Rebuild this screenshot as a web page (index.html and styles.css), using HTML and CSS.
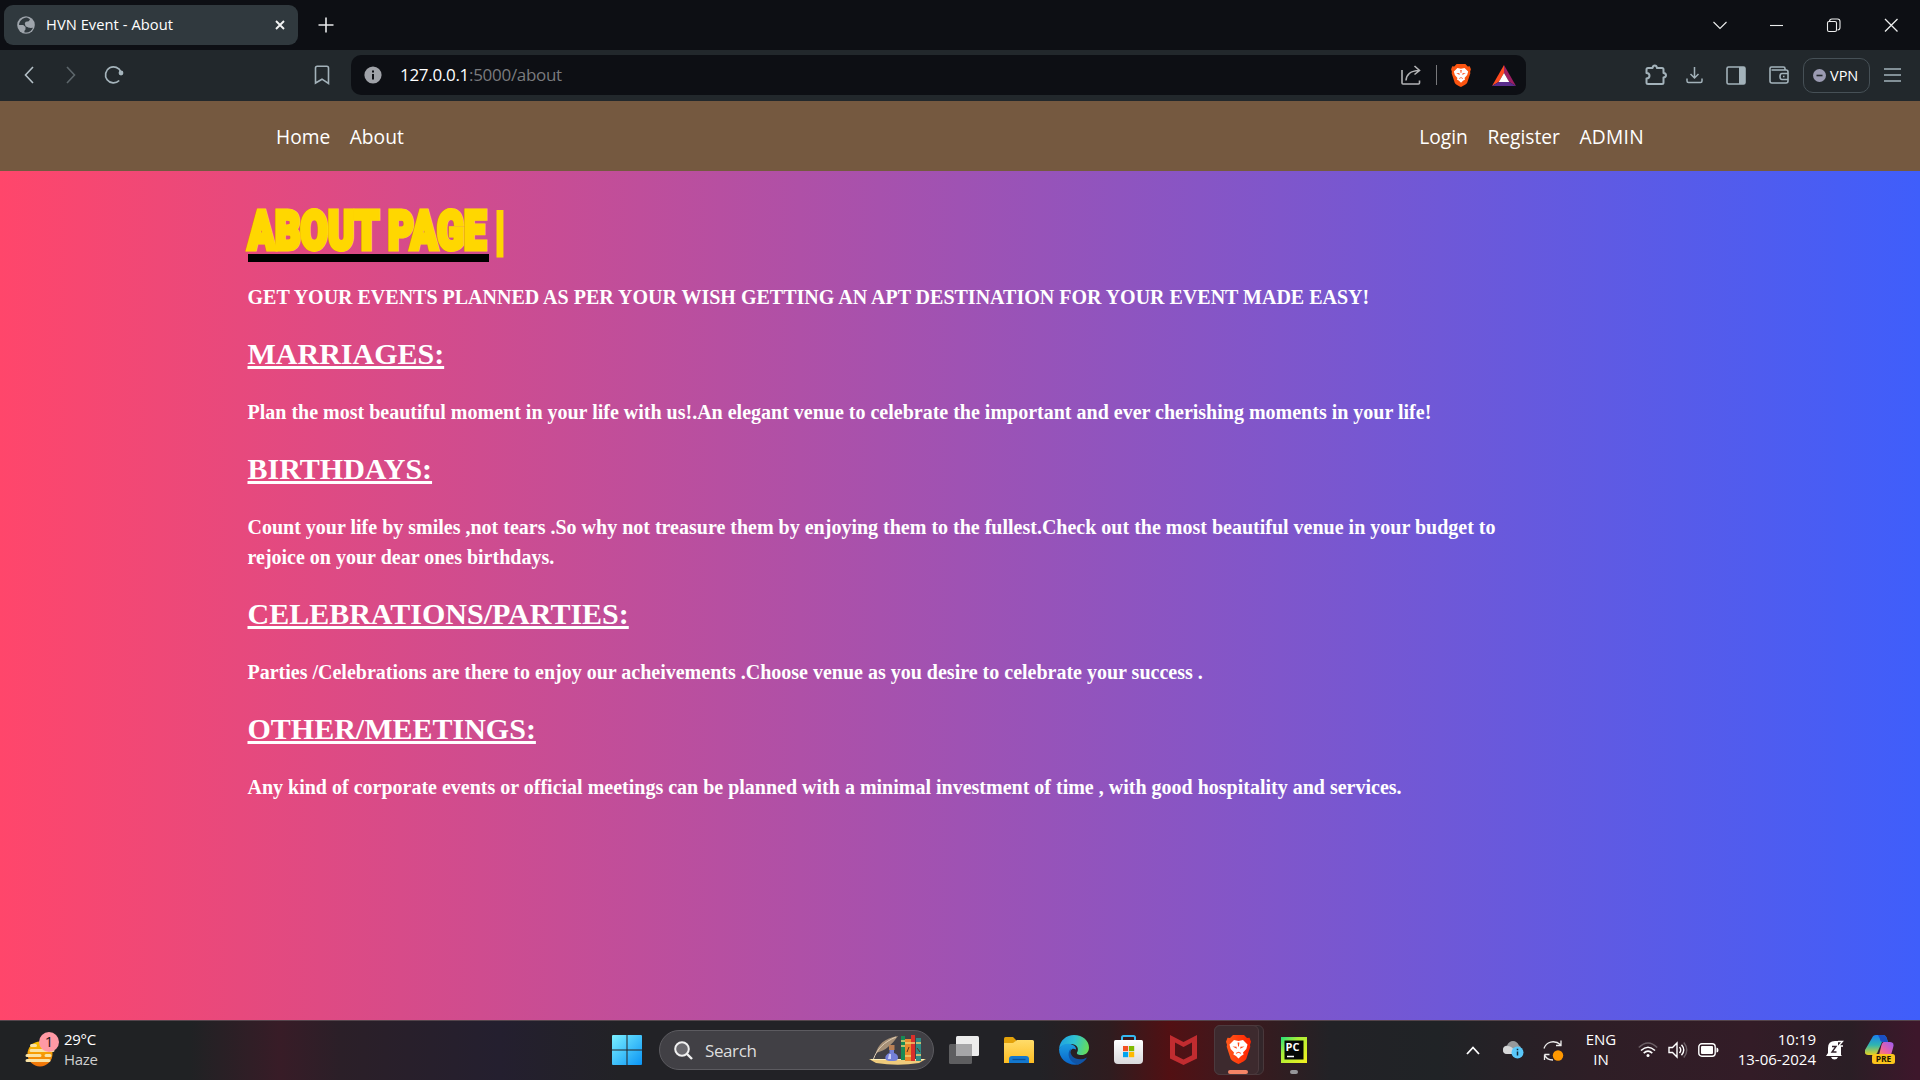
FILE: index.html
```html
<!DOCTYPE html>
<html lang="en">
<head>
<meta charset="utf-8">
<title>HVN Event - About</title>
<link rel="stylesheet" href="styles.css">
</head>
<body>
<svg class="defs" width="0" height="0">
  <defs>
    <linearGradient id="win" x1="0" y1="0" x2="1" y2="1"><stop offset="0" stop-color="#7af0ff"/><stop offset="1" stop-color="#0a94f5"/></linearGradient>
    <linearGradient id="sun" x1="0" y1="0" x2="0" y2="1"><stop offset="0" stop-color="#fbc500"/><stop offset="1" stop-color="#f0700a"/></linearGradient>
    <linearGradient id="folder" x1="0" y1="0" x2="0" y2="1"><stop offset="0" stop-color="#ffdc6a"/><stop offset="1" stop-color="#fdbd22"/></linearGradient>
    <linearGradient id="edgeA" x1="0" y1=".3" x2="1" y2=".5"><stop offset="0" stop-color="#1ea0e4"/><stop offset=".5" stop-color="#30c3d0"/><stop offset="1" stop-color="#66dc5a"/></linearGradient>
    <linearGradient id="edgeB" x1="0" y1="0" x2="0" y2="1"><stop offset="0" stop-color="#1b9de2"/><stop offset="1" stop-color="#0a64c8"/></linearGradient>
    <linearGradient id="bag" x1="0" y1="0" x2="0" y2="1"><stop offset="0" stop-color="#ffffff"/><stop offset="1" stop-color="#d9d9db"/></linearGradient>
    <linearGradient id="brave" x1="0" y1="0" x2="1" y2="0"><stop offset="0" stop-color="#ff5a1c"/><stop offset="1" stop-color="#ff2200"/></linearGradient>
    <linearGradient id="pc" x1="0" y1="0" x2="1" y2="1"><stop offset="0" stop-color="#21e07c"/><stop offset=".35" stop-color="#a8ee38"/><stop offset="1" stop-color="#f4f01e"/></linearGradient>
    <linearGradient id="copA" x1="0" y1="0" x2="0" y2="1"><stop offset="0" stop-color="#1a7ff0"/><stop offset=".5" stop-color="#2fb5b0"/><stop offset="1" stop-color="#e8d21e"/></linearGradient>
    <linearGradient id="copB" x1="1" y1="0" x2="0" y2="1"><stop offset="0" stop-color="#9a5cf5"/><stop offset=".6" stop-color="#e861a8"/><stop offset="1" stop-color="#ff8a5a"/></linearGradient>
    <symbol id="lion" viewBox="0 0 25 29">
      <path d="M7 0h11l3 3 2.500-.3 1.500 4-1 3 .3 2-4 12c-1 2-5 4-7.800 5.300C9.700 27.700 6 26 4.700 24L.7 11.700 1 9.700 0 6.700l1.500-4L4 3z"/>
      <path fill="#fff" d="M8 5l4.500 1L17 5l4.500 4.500-1.200 4.500-3.300 3.500.6 2-2.600 1.500-2.500 2.500-2.500-2.500L7.400 19.500l.6-2-3.300-3.500-1.200-4.500z"/>
      <path fill="#ff4716" d="M6.500 11.500l4 .3.300 2zM18.500 11.500l-4 .3-.3 2zM9.800 18l2.700-1.300 2.700 1.300-.5.700-2.200-1-2.200 1zM11.600 7.500h1.800l-.5 4h-.8z"/>
    </symbol>
  </defs>
</svg>

<header class="tabs">
  <div class="tab">
    <svg class="globe" width="18" height="18" viewBox="0 0 18 18"><circle cx="9" cy="9" r="8.800" fill="#9fa5ac"/><path d="M9.500 1.600C6 2 2.300 4.500 2 9h4.200l2.300 2v2.500L7.300 15l.3 1.400c4 .8 7.200-1.500 8.400-4.600l-2.500.2-3-1.500-2.800-3 1-1.700 3-.6L13 3.400c-1-.9-2-1.500-3.500-1.800z" fill="#30393e"/><path d="M8 7.500h4l2 3-2 1.200-3.500-1.500z" fill="#9fa5ac"/></svg>
    <span class="tab-title">HVN Event - About</span>
    <svg class="tab-close" width="10" height="10" viewBox="0 0 10 10"><path d="M1 1l8 8M9 1l-8 8" stroke="#f2f3f4" stroke-width="1.900"/></svg>
  </div>
  <svg class="plus" width="16" height="16" viewBox="0 0 16 16"><path d="M8 .5v15M.5 8h15" stroke="#e8e9ea" stroke-width="1.600"/></svg>
  <svg class="window-buttons" width="186" height="16" viewBox="0 0 186 16" fill="none" stroke="#eceded" stroke-width="1.100"><path d="M.5 5L7 11.500 13.500 5"/><path d="M57 8.500h13" stroke-width="1.100"/><rect x="114.500" y="4.500" width="9" height="10" rx="1.500"/><path d="M116.500 4.500q0-2.500 2.500-2.500h5.500q2.500 0 2.500 2.500v6q0 2.500-2.500 2.500"/><path d="M172 2l12.500 12.500M184.500 2L172 14.500" stroke-width="1.300"/></svg>
</header>

<div class="toolbar">
  <svg class="back" width="10" height="18" viewBox="0 0 10 18"><path d="M9 1L1.500 9 9 17" fill="none" stroke="#b4c0c7" stroke-width="1.600"/></svg>
  <svg class="forward" width="10" height="18" viewBox="0 0 10 18"><path d="M1 1l7.500 8L1 17" fill="none" stroke="#5d666b" stroke-width="1.600"/></svg>
  <svg class="reload" width="20" height="20" viewBox="0 0 20 20"><path d="M15.200 15.500A8 8 0 1 1 17 7" fill="none" stroke="#a5b4bc" stroke-width="1.700"/><circle cx="17" cy="8" r="2.400" fill="#a5b4bc"/></svg>
  <svg class="bookmark" width="16" height="20" viewBox="0 0 16 20"><path d="M1.500 18V3q0-1.700 1.700-1.700h9.600q1.700 0 1.700 1.700v15.500L8 14.200z" fill="none" stroke="#a3b2ba" stroke-width="1.600"/></svg>
  <div class="address">
    <svg class="info" width="18" height="18" viewBox="0 0 18 18"><circle cx="9" cy="9" r="8.600" fill="#9fa2a8"/><path d="M9 8v5.500M9 4.500v2" stroke="#0d0f14" stroke-width="2"/></svg>
    <span class="url"><b>127.0.0.1</b>:5000/about</span>
    <svg class="share" width="20" height="20" viewBox="0 0 20 20" fill="none" stroke="#b3b4b6" stroke-width="1.600"><path d="M1 5v13q0 1 1 1h15.500q1 0 1-1v-2.500M5 15.500C5.500 9 9 6 18 5.500M13.500 1l5 4.500-5 4"/></svg>
    <span class="divider"></span>
    <svg class="shield" width="20" height="23"><use href="#lion" fill="#fb5410"/></svg>
    <svg class="bat" width="24" height="21" viewBox="0 0 24 21"><path d="M12 0L0 21l7-4.200L12 8z" fill="#ff4b1f"/><path d="M12 0l12 21-7-4.200L12 8z" fill="#9e1f63"/><path d="M0 21h24l-7-4.200H7z" fill="#5a2d8c"/><path d="M12 8L6.800 17h10.400z" fill="#fff"/></svg>
  </div>
  <svg class="ext" width="22" height="22" viewBox="0 0 22 22"><path d="M3 4h4.500q.5-2.500 2.300-2.500T12 4h5q1.500 0 1.500 1.500V9q2.500.3 2.500 2.200t-2.500 2.300v5q0 1.500-1.500 1.500H3q-1.500 0-1.500-1.500v-4q3-.3 3-2.800t-3-2.700V5.500Q1.500 4 3 4z" fill="none" stroke="#a3b2ba" stroke-width="2" stroke-linejoin="round"/></svg>
  <svg class="down" width="17" height="18" viewBox="0 0 17 18"><path d="M8.500 1v11M4.500 8l4 4 4-4M1 12.500V15q0 1.500 1.500 1.500h12q1.500 0 1.500-1.500v-2.500" fill="none" stroke="#a3b2ba" stroke-width="1.500"/></svg>
  <svg class="side" width="20" height="19" viewBox="0 0 20 19"><rect x="1" y="1" width="18" height="17" rx="1.500" fill="none" stroke="#a3b2ba" stroke-width="1.600"/><path d="M13 1h6v17h-6z" fill="#a3b2ba"/></svg>
  <svg class="wallet" width="20" height="18" viewBox="0 0 20 18"><path d="M16 4V2.500Q16 1 14.500 1H2.500Q1 1 1 2.500V15q0 2 2 2h14q2 0 2-2V6q0-2-2-2H2.500M19 7.500h-6q-2 0-2 3t2 3h6M14 10.500h1.500" fill="none" stroke="#a3b2ba" stroke-width="1.600"/></svg>
  <div class="vpn"><svg width="13" height="13" viewBox="0 0 13 13"><circle cx="6.500" cy="6.500" r="6.500" fill="#9b9bb2"/><path d="M3.500 6.500h6" stroke="#23282c" stroke-width="1.600"/></svg><span>VPN</span></div>
  <svg class="menu" width="17" height="14" viewBox="0 0 17 14"><path d="M0 1h17M0 7h17M0 13h17" stroke="#a3b2ba" stroke-width="1.500"/></svg>
</div>

<nav class="navbar">
  <div class="links"><a>Home</a><a>About</a></div>
  <div class="links"><a>Login</a><a>Register</a><a class="admin">ADMIN</a></div>
</nav>

<main class="page">
  <h1><span class="title"><span class="title-text">ABOUT PAGE</span></span><span class="cursor">|</span></h1>
  <p class="lead">GET YOUR EVENTS PLANNED AS PER YOUR WISH GETTING AN APT DESTINATION FOR YOUR EVENT MADE EASY!</p>
  <h2>MARRIAGES:</h2>
  <p>Plan the most beautiful moment in your life with us!.An elegant venue to celebrate the important and ever cherishing moments in your life!</p>
  <h2>BIRTHDAYS:</h2>
  <p>Count your life by smiles ,not tears .So why not treasure them by enjoying them to the fullest.Check out the most beautiful venue in your budget to<br>rejoice on your dear ones birthdays.</p>
  <h2>CELEBRATIONS/PARTIES:</h2>
  <p>Parties /Celebrations are there to enjoy our acheivements .Choose venue as you desire to celebrate your success .</p>
  <h2>OTHER/MEETINGS:</h2>
  <p>Any kind of corporate events or official meetings can be planned with a minimal investment of time , with good hospitality and services.</p>
</main>

<footer class="taskbar">
  <svg class="weather" width="34" height="36" viewBox="0 0 34 36"><circle cx="15" cy="22" r="12.500" fill="url(#sun)"/><path d="M6.500 13.500h4M6 18.500h22M2 23.500h13M21 23.500h4M2 28.500h22" stroke="#f9e3a5" stroke-width="3" stroke-linecap="round"/><circle cx="24" cy="10" r="10" fill="#ff99a4"/><text x="24" y="15" text-anchor="middle" class="badge">1</text></svg>
  <div class="temp"><span>29°C</span><span class="haze">Haze</span></div>
  <svg class="start" width="30" height="30" viewBox="0 0 30 30"><path d="M1 0h13.500v14.500H0V1q0-1 1-1zM15.500 0H29q1 0 1 1v13.500H15.500zM0 15.500h14.500V30H1q-1 0-1-1zM15.500 15.500H30V29q0 1-1 1H15.500z" fill="url(#win)"/></svg>
  <div class="search">
    <svg class="lens" width="19" height="19" viewBox="0 0 19 19"><circle cx="8" cy="8" r="6.800" fill="#6a696e" stroke="#f1f1f1" stroke-width="2"/><path d="M13 13l5 5" stroke="#f1f1f1" stroke-width="2.400"/></svg>
    <span>Search</span>
    <svg class="books" width="57" height="30" viewBox="0 0 57 30"><path d="M0 24h57l-7 4q-21 3.500-43 0z" fill="#efcb7c"/><path d="M2 24.500h53" stroke="#fff0b8" stroke-width="1"/><path d="M7 18C9 10 15 3 29 1c-3 4-6 8-10 11-3 3-7 4-12 6z" fill="#a58f76"/><path d="M4.500 24C8 14 15 7 27 2" stroke="#e1cfb5" fill="none"/><path d="M20 10h5.500v5H20z" fill="#b98055"/><path d="M20.500 15h4.500v3q4 1 4 4.500t-4 3.500h-5q-4-.5-3.700-3.500t4.200-4.500z" fill="#7380d8"/><path d="M20 19h2v5h-3z" fill="#c8cdf7"/><path d="M32 1h4v24h-4z" fill="#188a55"/><path d="M36 4h6v22h-6z" fill="#e98a2d"/><path d="M42 0h4v26h-4z" fill="#d9302a"/><path d="M47 3h5v23h-5z" fill="#2e8a84"/><path d="M32 6h4M32 11h4M36 8h6M36 21h6M42 8h4M47 8h5M47 20h5" stroke="#f0d070" stroke-width="1.300"/><path d="M38 17l2-5M48 13l3 4" stroke="#5b2d18"/></svg>
  </div>
  <svg class="taskview" width="30" height="28" viewBox="0 0 30 28"><rect y="8" width="23" height="20" rx="1.500" fill="#5e5e60"/><rect x="7" width="23" height="20" rx="1.500" fill="#ececec"/><path d="M7 8h16v12H8.500Q7 20 7 18.500z" fill="#a6a6a8"/></svg>
  <svg class="explorer" width="30" height="26" viewBox="0 0 30 26"><path d="M0 1.500Q0 0 1.500 0H9l3.500 3.500L9 8H0z" fill="#e3a20a"/><path d="M0 6h9l4-3h15.500Q30 3 30 4.500V26H0z" fill="url(#folder)"/><path d="M5 26v-4q0-3 3-3h14q3 0 3 3v4z" fill="#1378cf"/><path d="M8.500 22.500h13" stroke="#0b4f96" stroke-width="1.300"/></svg>
  <svg class="edge" width="30" height="30" viewBox="0 0 30 30"><path d="M0 14C1 5 7.500 0 15 0c9 0 15 6 15 12.500 0 5-3.500 7.500-7.500 7.500-4 0-5-1.500-4.500-2.500 2-2.500 1-8-5-8.500C7.500 8.500 1.500 11 0 14z" fill="url(#edgeA)"/><path d="M0 14c2-4.500 7-6 11.500-5 4 1 6 3.500 5.500 5.500-4-2.500-6 1-6 4 0 5.500 5 9.500 11 10C12 32.500 0 26 0 14z" fill="url(#edgeB)"/><path d="M12 13.500C7 18 10 28 19 29.500c4-1 7.500-4 9-7-9 5-19-1-16-9z" fill="#1054a6"/></svg>
  <svg class="store" width="29" height="30" viewBox="0 0 29 30"><path d="M8 7V2.500Q8 1 9.500 1h10Q21 1 21 2.500V7" fill="none" stroke="#35b9f1" stroke-width="2"/><path d="M1.500 5h26Q29 5 29 6.500V25q0 4-4 4H4q-4 0-4-4V6.500Q0 5 1.500 5z" fill="url(#bag)"/><path d="M9 11h5.200v5.200H9z" fill="#f25022"/><path d="M15 11h5.200v5.200H15z" fill="#7fba00"/><path d="M9 17h5.200v5.200H9z" fill="#00a4ef"/><path d="M15 17h5.200v5.200H15z" fill="#ffb900"/></svg>
  <svg class="mcafee" width="27" height="30" viewBox="0 0 27 30"><path d="M0 0l13.500 7L27 0v23.500L13.500 30 0 23.500zM5 7.500v12.800l8.500 4.200 8.500-4.200V7.500l-8.500 4.600z" fill="#c12c30" fill-rule="evenodd"/></svg>
  <div class="stack"><div class="active">
    <svg width="25" height="29"><use href="#lion" fill="url(#brave)"/></svg><i></i>
  </div></div>
  <div class="pycharm">
    <svg width="26" height="26" viewBox="0 0 26 26"><path d="M0 0h26v26H0z" fill="url(#pc)"/><path d="M3.500 3.500h19v19h-19z" fill="#050805"/><text x="4.500" y="13.500" class="pc-text">PC</text><path d="M6 19.500h7" stroke="#fff" stroke-width="1.500"/></svg><i></i>
  </div>
  <svg class="up" width="14" height="9" viewBox="0 0 14 9"><path d="M1 8l6-6.500L13 8" fill="none" stroke="#fff" stroke-width="1.800"/></svg>
  <svg class="cloud" width="21" height="18" viewBox="0 0 21 18"><path d="M5 13q-5 0-5-4t4-4.500Q6 0 10 0t6 4.500q2 .5 2 4T14 13z" fill="#97999b"/><path d="M4 13q-4 0-4-4t4-4q5 0 8 5l1 3z" fill="#d6d7d8"/><circle cx="14.500" cy="11.500" r="6" fill="#5ac8fa"/><path d="M14.500 10.500v4M14.500 7.800v1.500" stroke="#102a38" stroke-width="1.500"/></svg>
  <svg class="sync" width="21" height="21" viewBox="0 0 21 21"><path d="M1 8.500C3 2 11-1 18 5V.5M18 5.500h-5M10 20C6 20 2.500 18 1.500 14.500V20M1.500 14.500h5" fill="none" stroke="#ececec" stroke-width="1.300"/><circle cx="15" cy="15.500" r="5.200" fill="#ff9800"/></svg>
  <div class="lang"><span>ENG</span><span>IN</span></div>
  <svg class="wifi" width="20" height="16" viewBox="0 0 20 16" fill="none" stroke="#fff" stroke-width="1.600"><path d="M.8 5.500Q10-3.500 19.200 5.500" stroke="#6b5f65"/><path d="M3 8.500q7-6.500 14 0M5.700 11.200q4.300-4 8.600 0"/><circle cx="10" cy="13.500" r="1.500" fill="#fff" stroke="none"/></svg>
  <svg class="sound" width="20" height="18" viewBox="0 0 20 18" fill="none" stroke="#fff" stroke-width="1.400"><path d="M1 6.500h3.500L9 2v14l-4.500-4.500H1zM11.500 6q2.500 3 0 6M13.500 3.800q4.500 5.200 0 10.400"/><path d="M15.800 1.500q6 7.500 0 15" stroke="#6b5f65"/></svg>
  <svg class="battery" width="21" height="14" viewBox="0 0 21 14"><rect x=".8" y=".8" width="16.400" height="12.400" rx="3" fill="none" stroke="#fff" stroke-width="1.400"/><rect x="3" y="3" width="12" height="8" rx="1" fill="#fff"/><path d="M18.500 4.500q2 0 2 2.500t-2 2.500z" fill="#fff"/></svg>
  <div class="clock"><span>10:19</span><span>13-06-2024</span></div>
  <svg class="bell" width="18" height="20" viewBox="0 0 18 20"><path d="M2 8q0-7 7-7h3v5h3v9l1 1H0l2-3zM5 17h7q-1 2.500-3.500 2.500T5 17z" fill="#fff"/><path d="M6 6.500h4L6 12h4.500" fill="none" stroke="#30202a" stroke-width="1.400"/><path d="M12 1.500h4.500l-4 4.500H17" fill="none" stroke="#fff" stroke-width="1.300"/></svg>
  <svg class="copilot" width="30" height="30" viewBox="0 0 30 30"><path d="M7 3q1-3 4-3h7q3 0 4 4l1 3h-6l-4 9q-1 4-5 4H3q-4 0-3-5z" fill="url(#copA)"/><path d="M13 0h5q3 0 4 4l1 3h-5q-3 0-3-3z" fill="#1b4fc4"/><path d="M19 7h6q5 0 3 6l-2 7H14l2-8q1-5 3-5z" fill="url(#copB)"/><rect x="7" y="19" width="23" height="10" rx="2.500" fill="#fcc41c"/><text x="18.500" y="27.300" text-anchor="middle" class="pre">PRE</text></svg>
</footer>
</body>
</html>
```
FILE: styles.css
```css
* { box-sizing: border-box; }
body { margin: 0; width: 1920px; height: 1080px; overflow: hidden; display: flex; flex-direction: column; font-family: "Open Sans", "Noto Sans", sans-serif; color: #fff; }
svg { display: block; flex: none; }
.defs { position: absolute; }
span, a { white-space: nowrap; }

.tabs { height: 50px; background: #0d0f14; display: flex; align-items: center; padding-left: 4px; }
.tab { width: 294px; height: 40px; border-radius: 9px; background: #30393e; display: flex; align-items: center; padding: 0 13px; }
.tab-title { margin-left: 11px; padding-bottom: 2px; font-size: 14.700px; letter-spacing: .05px; }
.tab-close { margin-left: auto; }
.plus { margin-left: 20px; }
.window-buttons { margin-left: auto; margin-right: 21px; }

.toolbar { height: 51px; background: #22282c; display: flex; align-items: center; padding-bottom: 1px; }
.back { margin-left: 24px; }
.forward { margin-left: 32px; }
.reload { margin-left: 28px; }
.bookmark { margin-left: 190px; }
.address { margin-left: 21px; width: 1175px; height: 40px; border-radius: 10px; background: #0d0f14; display: flex; align-items: center; }
.info { margin-left: 13px; }
.url { margin-left: 18px; padding-bottom: 2px; font-size: 17px; letter-spacing: -.3px; color: #7a7b7e; }
.url b { font-weight: 400; color: #fff; }
.share { margin-left: auto; }
.divider { width: 1px; height: 20px; margin-left: 15px; background: #77787b; }
.shield { margin-left: 14px; }
.bat { margin: 0 10px 0 21px; }
.ext { margin-left: 119px; }
.down { margin-left: 19px; }
.side { margin-left: 23px; }
.wallet { margin-left: 23px; }
.vpn { width: 67px; height: 35px; margin-left: 14px; border: 1px solid #465056; border-radius: 10px; display: flex; align-items: center; padding-left: 9px; font-size: 14.500px; }
.vpn span { margin-left: 4px; }
.menu { margin-left: 14px; }

.navbar { height: 70px; background: #755940; display: flex; justify-content: space-between; align-items: center; padding: 0 276px; font-size: 19.200px; }
.links { display: flex; gap: 19.500px; }
.admin { letter-spacing: .3px; }

.page { flex: 1; background: linear-gradient(to right, #ff466b, #3f5efb); padding: 29px 240px 0 247.500px; font-family: "Liberation Serif", serif; font-weight: 700; }
h1 { margin: 0; height: 62px; display: flex; color: #ffd700; font: 900 54px/62px Roboto, sans-serif; }
.title { width: 241.500px; height: 62px; border-bottom: 8px solid #000; }
.title-text { display: inline-block; transform: scaleX(.73); transform-origin: left; letter-spacing: .2px; -webkit-text-stroke: 5px #ffd700; }
.cursor { margin-left: 4px; -webkit-text-stroke: 2px #ffd700; }
h2 { margin: 24px 0 25px; font-size: 30px; line-height: 36px; text-decoration: underline; text-decoration-thickness: 3px; }
p { margin: 0; font-size: 20px; line-height: 30px; white-space: nowrap; }
.lead { margin-top: 20px; }

.taskbar { height: 60px; border-top: 1px solid #55454c; background: linear-gradient(to right, #202224 190px, #381c27 280px, #2b1f28 340px, #241f2f 500px, #222226 620px, #222226 1040px, #2f1c1f 1110px, #521013 1170px, #45161a 1210px, #222226 1330px, #202326 1440px, #2e1e26 1590px, #331c27 1750px, #2a1e25 1850px, #3d172b 1915px); display: flex; align-items: center; padding-bottom: 1px; }
.weather { margin-left: 25px; }
.badge { font: 15px "Open Sans", sans-serif; fill: #251518; }
.temp, .lang, .clock { display: flex; flex-direction: column; font-size: 15px; line-height: 20px; padding-bottom: 3px; }
.temp { margin-left: 5px; width: 90px; letter-spacing: -.3px; }
.haze { color: #cfcfcf; }
.start { margin-left: 458px; }
.search { width: 275px; height: 40px; margin-left: 17px; border: 1px solid #5c5b60; border-radius: 20px; background: #414045; display: flex; align-items: center; padding-left: 14px; font-size: 17px; letter-spacing: -.4px; color: #dedede; }
.search span { margin-left: 12px; }
.books { margin-left: auto; margin-right: 7px; }
.taskview { margin-left: 15px; }
.explorer, .edge, .store { margin-left: 25px; }
.mcafee { margin-left: 27px; }
.stack { width: 50px; height: 50px; margin-left: 17px; border: 1px solid #49383b; border-radius: 6px; background: #33262a; }
.active { width: 45px; height: 50px; margin: -1px; padding: 9px 0 0 3px; border: 1px solid #4c3a3e; border-radius: 6px; background: #3d2a2e; display: flex; flex-direction: column; align-items: center; }
.active i { width: 20px; height: 4px; border-radius: 2px; background: #f58466; margin-top: 6px; }
.pycharm { margin-left: 17px; height: 50px; padding-top: 12px; display: flex; flex-direction: column; align-items: center; }
.pycharm i { width: 8px; height: 4px; margin-top: 7px; border-radius: 2px; background: #96969a; }
.pc-text { font: 700 11px "Open Sans", sans-serif; fill: #fff; }
.up { margin-left: 159px; }
.cloud { margin-left: 23px; }
.sync { margin-left: 19px; }
.lang { width: 40px; margin-left: 17px; text-align: center; }
.wifi { margin-left: 17px; }
.sound { margin-left: 10px; }
.battery { margin-left: 10px; }
.clock { width: 90px; margin-left: 7px; text-align: right; }
.bell { margin-left: 10px; }
.copilot { margin-left: 21px; }
.pre { font: 700 8.500px "Open Sans", sans-serif; fill: #221a00; }
```
